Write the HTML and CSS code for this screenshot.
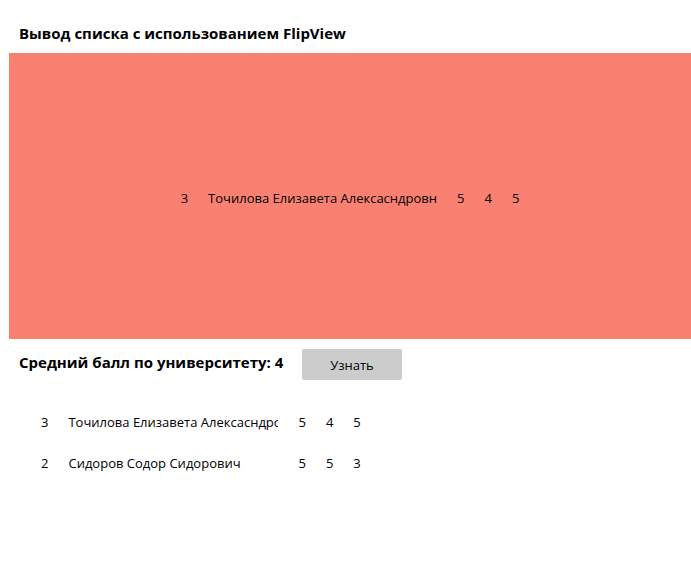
FILE: index.html
```html
<!DOCTYPE html>
<html lang="ru">
<head>
<meta charset="utf-8">
<title>FlipView</title>
<link rel="stylesheet" href="styles.css">
</head>
<body>
<h1 class="title">Вывод списка с использованием FlipView</h1>
<div class="flip">
  <div class="item">
    <span class="cell">3</span>
    <span class="cell">Точилова Елизавета Алексасндровн</span>
    <span class="cell">5</span>
    <span class="cell">4</span>
    <span class="cell">5</span>
  </div>
</div>
<div class="avg-row">
  <h2 class="avg">Средний балл по университету: 4</h2>
  <button class="btn">Узнать</button>
</div>
<div class="list">
  <div class="row">
    <span class="cell">3</span>
    <span class="cell name">Точилова Елизавета Алексасндровна</span>
    <span class="cell">5</span>
    <span class="cell">4</span>
    <span class="cell">5</span>
  </div>
  <div class="row">
    <span class="cell">2</span>
    <span class="cell name">Сидоров Содор Сидорович</span>
    <span class="cell">5</span>
    <span class="cell">5</span>
    <span class="cell">3</span>
  </div>
</div>
</body>
</html>
```
FILE: styles.css
```css
html, body {
  margin: 0;
  padding: 0;
  background: #fff;
  overflow: hidden;
}
body {
  font-family: "Open Sans", "Noto Sans", sans-serif;
  font-size: 13px;
  color: #000;
}
.title {
  margin: 0;
  padding: 23px 0 10px 19px;
  font-size: 15px;
  line-height: 20px;
  font-weight: 700;
}
.flip {
  margin-left: 9px;
  height: 286px;
  box-sizing: border-box;
  padding-top: 4px;
  background: #fa8072;
  display: flex;
  align-items: center;
  justify-content: center;
}
.item, .row {
  display: flex;
  white-space: nowrap;
  line-height: 20px;
}
.cell {
  margin-right: 20px;
}
.item .cell:last-child, .row .cell:last-child {
  margin-right: 0;
}
.avg-row {
  display: flex;
  align-items: flex-start;
  margin-top: 10px;
  padding-left: 19px;
}
.avg {
  margin: 3px 0 0 0;
  width: 283px;
  font-size: 15px;
  line-height: 20px;
  font-weight: 700;
}
.btn {
  width: 100px;
  height: 31px;
  border: none;
  border-radius: 2px;
  background: #cccccc;
  font-family: inherit;
  font-size: 13px;
  color: #000;
  padding: 0;
}
.list {
  margin-top: 21px;
  padding-left: 41px;
}
.row {
  height: 41px;
  align-items: center;
}
.name {
  width: 210px;
  overflow: hidden;
}
```
